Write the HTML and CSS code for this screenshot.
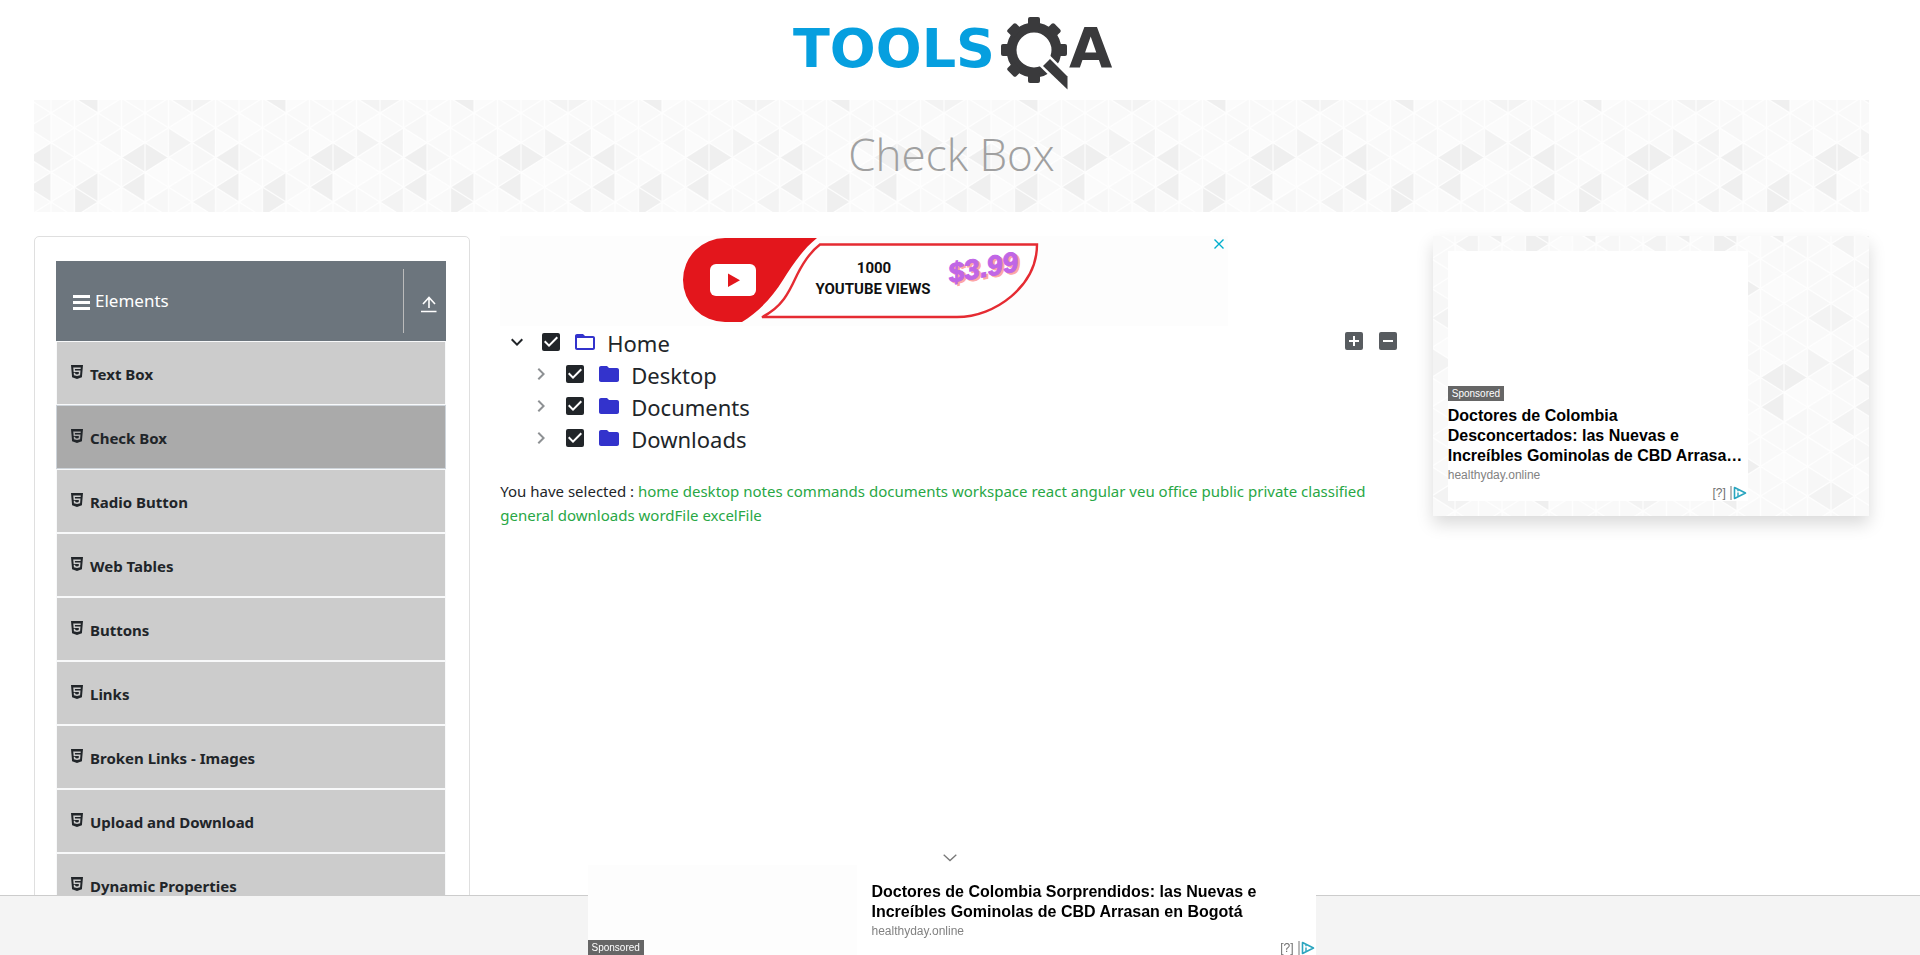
FILE: index.html
```html
<!DOCTYPE html>
<html lang="en">
<head>
<meta charset="utf-8">
<title>Check Box</title>
<link rel="stylesheet" href="styles.css">
</head>
<body>
<svg class="defs" width="0" height="0" aria-hidden="true">
  <symbol id="html5" viewBox="0 0 384 512"><path d="M0 32l34.9 395.8L191.5 480l157.6-52.2L384 32H0zm308.2 127.9H124.4l4.1 49.4h175.6l-13.6 148.4-97.9 27v.3h-1.1l-98.7-27.3-6-75.8h47.7L138 320l53.5 14.5 53.7-14.5 6-62.2H84.3L71.5 112.2h241.1l-4.4 47.7z"/></symbol>
  <symbol id="more" viewBox="0 0 24 24"><path d="M7.41 8.59 12 13.17l4.59-4.58L18 10l-6 6-6-6z"/></symbol>
  <symbol id="right" viewBox="0 0 24 24"><path d="M8.59 16.59 13.17 12 8.59 7.41 10 6l6 6-6 6z"/></symbol>
  <symbol id="folder" viewBox="0 0 24 24"><path d="M10 4H4c-1.1 0-2 .9-2 2v12c0 1.100.9 2 2 2h16c1.100 0 2-.9 2-2V8c0-1.100-.9-2-2-2h-8z"/></symbol>
  <symbol id="folder-open" viewBox="0 0 24 24"><path d="M20 6h-8l-2-2H4c-1.100 0-2 .9-2 2v12c0 1.100.9 2 2 2h16c1.100 0 2-.9 2-2V8c0-1.100-.9-2-2-2zm0 12H4V8h16z"/></symbol>
  <symbol id="adchoice" viewBox="0 0 17 14"><path d="M1 0v14" stroke="#777" fill="none"/><path d="M4.500 1.500v11l11-5.500z" stroke="#2aa5bf" stroke-width="1.600" stroke-linejoin="round" fill="none"/><path d="M8 6.500v3.500M8 4v1.300" stroke="#2aa5bf" stroke-width="1.400" fill="none"/></symbol>
</svg>
<header class="top">
  <a class="logo" href="#" aria-label="ToolsQA">
    <svg width="324" height="76" viewBox="0 0 324 76">
      <text class="logo-blue" x="3" y="51">TOOLS</text>
      <g fill="#3a3a3c">
        <circle cx="244" cy="34" r="22.500" fill="none" stroke="#3a3a3c" stroke-width="10"/>
        <rect x="238" y="1" width="12" height="10" rx="2"/>
        <rect x="238" y="1" width="12" height="10" rx="2" transform="rotate(45 244 34)"/>
        <rect x="238" y="1" width="12" height="10" rx="2" transform="rotate(90 244 34)"/>
        <rect x="238" y="1" width="12" height="10" rx="2" transform="rotate(135 244 34)"/>
        <rect x="238" y="1" width="12" height="10" rx="2" transform="rotate(180 244 34)"/>
        <rect x="238" y="1" width="12" height="10" rx="2" transform="rotate(225 244 34)"/>
        <rect x="238" y="1" width="12" height="10" rx="2" transform="rotate(270 244 34)"/>
        <rect x="238" y="1" width="12" height="10" rx="2" transform="rotate(315 244 34)"/>
        <path d="M260 43l17 17v13.500L253 50z" fill="#fff" stroke="#fff" stroke-width="5"/>
        <path d="M260 43l17.500 17.500v13L253 50z"/>
      </g>
      <text class="logo-dark" x="279" y="51">A</text>
    </svg>
  </a>
</header>
<main class="page">
  <div class="banner pattern"><h1>Check Box</h1></div>
  <div class="columns">
    <nav class="side">
      <div class="group">
        <svg width="18" height="16" viewBox="0 0 18 16"><path d="M0 1.500h17M0 7.500h17M0 13.500h17" stroke="#fff" stroke-width="3"/></svg>
        <span class="group-name">Elements</span>
        <button class="collapse" aria-label="Collapse">
          <svg width="16" height="17" viewBox="0 0 16 17" fill="none" stroke="#fff" stroke-width="1.600"><path d="M8 12V1.500M2 8l6-6.500L14 8M0 15.500h15.500"/></svg>
        </button>
      </div>
      <ul class="menu">
        <li><a href="#"><svg class="h5"><use href="#html5"/></svg>Text Box</a></li>
        <li class="active"><a href="#"><svg class="h5"><use href="#html5"/></svg>Check Box</a></li>
        <li><a href="#"><svg class="h5"><use href="#html5"/></svg>Radio Button</a></li>
        <li><a href="#"><svg class="h5"><use href="#html5"/></svg>Web Tables</a></li>
        <li><a href="#"><svg class="h5"><use href="#html5"/></svg>Buttons</a></li>
        <li><a href="#"><svg class="h5"><use href="#html5"/></svg>Links</a></li>
        <li><a href="#"><svg class="h5"><use href="#html5"/></svg>Broken Links - Images</a></li>
        <li><a href="#"><svg class="h5"><use href="#html5"/></svg>Upload and Download</a></li>
        <li><a href="#"><svg class="h5"><use href="#html5"/></svg>Dynamic Properties</a></li>
      </ul>
    </nav>
    <section class="content">
      <div class="views-ad">
        <svg width="724" height="90" viewBox="0 0 724 90">
          <path fill="#e3161c" d="M225 2H317C302 14 292 30 283 44C272 62 258 76 242 86H225A42 42 0 0 1 225 2z"/>
          <rect x="210" y="28" width="46" height="32" rx="6" fill="#fff"/>
          <path fill="#e3161c" d="M228 37.500v13.500l12-6.800z"/>
          <path fill="#fff" stroke="#e52b32" stroke-width="2.400" d="M320 8.500H537C537 50 495 81 457 81H262C283 71 290 54 297 39C303 27 310 16 320 8.500z"/>
          <text class="views" x="374" y="37" text-anchor="middle">1000</text>
          <text class="views" x="373" y="58" text-anchor="middle">YOUTUBE VIEWS</text>
          <g transform="rotate(-10 483 31)">
            <text class="price price-shadow" x="485" y="43" text-anchor="middle">$3.99</text>
            <text class="price" x="483" y="41" text-anchor="middle">$3.99</text>
          </g>
        </svg>
        <button class="ad-close" aria-label="Close ad"><svg width="10" height="10" viewBox="0 0 10 10"><path d="M.5.5l9 9M9.500.5l-9 9" stroke="#00aecd" stroke-width="1.400"/></svg></button>
      </div>
      <div class="tree-area">
        <ul class="tree">
          <li>
            <div class="node">
              <button class="toggle open" aria-label="Toggle"><svg><use href="#more"/></svg></button>
              <input type="checkbox" id="n-home" checked>
              <svg class="fold"><use href="#folder-open"/></svg>
              <label for="n-home">Home</label>
            </div>
            <ul>
              <li class="node"><button class="toggle" aria-label="Toggle"><svg><use href="#right"/></svg></button><input type="checkbox" id="n-desk" checked><svg class="fold"><use href="#folder"/></svg><label for="n-desk">Desktop</label></li>
              <li class="node"><button class="toggle" aria-label="Toggle"><svg><use href="#right"/></svg></button><input type="checkbox" id="n-docs" checked><svg class="fold"><use href="#folder"/></svg><label for="n-docs">Documents</label></li>
              <li class="node"><button class="toggle" aria-label="Toggle"><svg><use href="#right"/></svg></button><input type="checkbox" id="n-down" checked><svg class="fold"><use href="#folder"/></svg><label for="n-down">Downloads</label></li>
            </ul>
          </li>
        </ul>
        <div class="tools">
          <button aria-label="Expand all"><svg viewBox="0 0 24 24"><path d="M19 3H5a2 2 0 0 0-2 2v14a2 2 0 0 0 2 2h14a2 2 0 0 0 2-2V5a2 2 0 0 0-2-2zm-2 10h-4v4h-2v-4H7v-2h4V7h2v4h4z"/></svg></button>
          <button aria-label="Collapse all"><svg viewBox="0 0 24 24"><path d="M19 3H5a2 2 0 0 0-2 2v14a2 2 0 0 0 2 2h14a2 2 0 0 0 2-2V5a2 2 0 0 0-2-2zm-2 10H7v-2h10z"/></svg></button>
        </div>
      </div>
      <p class="result">You have selected : <span>home</span> <span>desktop</span> <span>notes</span> <span>commands</span> <span>documents</span> <span>workspace</span> <span>react</span> <span>angular</span> <span>veu</span> <span>office</span> <span>public</span> <span>private</span> <span>classified</span> <span>general</span> <span>downloads</span> <span>wordFile</span> <span>excelFile</span></p>
    </section>
    <aside class="promo pattern shifted">
      <div class="promo-ad">
        <span class="badge">Sponsored</span>
        <a class="ad-title" href="#">Doctores de Colombia Desconcertados: las Nuevas e Increíbles Gominolas de CBD Arrasa…</a>
        <span class="host">healthyday.online</span>
        <div class="choices">[?]<svg width="17" height="14"><use href="#adchoice"/></svg></div>
      </div>
    </aside>
  </div>
</main>
<footer class="sticky">
  <div class="sticky-ad">
    <button class="sticky-close" aria-label="Hide ad"><svg width="14" height="8" viewBox="0 0 14 8"><path d="M.7.7 7 6.500 13.300.7" fill="none" stroke="#777" stroke-width="1.300"/></svg></button>
    <div class="sticky-body">
      <div class="sticky-pic"><span class="badge">Sponsored</span></div>
      <div class="sticky-text">
        <a class="ad-title" href="#">Doctores de Colombia Sorprendidos: las Nuevas e Increíbles Gominolas de CBD Arrasan en Bogotá</a>
        <span class="host">healthyday.online</span>
        <div class="choices">[?]<svg width="17" height="14"><use href="#adchoice"/></svg></div>
      </div>
    </div>
  </div>
</footer>
</body>
</html>
```

FILE: styles.css
```css
* { box-sizing: border-box; }
body {
  margin: 0;
  background: #fff;
  color: #212529;
  font-family: "Noto Sans", "Open Sans", sans-serif;
  font-size: 15px;
  line-height: 24px;
}
button { border: 0; padding: 0; background: none; cursor: pointer; display: block; }
ul { list-style: none; margin: 0; padding: 0; }
a { color: inherit; text-decoration: none; }
svg { display: block; flex: none; }
.defs { position: absolute; }

.top { display: flex; justify-content: center; height: 100px; padding: 16px 17px 0 0; }
.logo-blue, .logo-dark { font-family: "DejaVu Sans", sans-serif; font-weight: 700; }
.logo-blue { fill: #069fdf; font-size: 54px; }
.logo-dark { fill: #3a3a3c; font-size: 56px; }

.page { padding: 0 51px 0 34px; }
.pattern {
  background-color: #f9f9f9;
  background-size: 188px 178px;
  background-position: 17px 13px;
  background-image: url("data:image/svg+xml,%3Csvg xmlns='http://www.w3.org/2000/svg' width='188' height='178' viewBox='0 0 8 12' preserveAspectRatio='none'%3E%3Cpath fill='%23fbfbfb' d='M0 0l1 1-1 1zM2 2l1 1-1 1zM5 3l1 1-1 1zM4 4l1 1-1 1zM3 1l1 1-1 1zM6 6l1 1-1 1zM1 7l1 1-1 1zM0 4l1 1-1 1zM7 1l1 1-1 1zM4 8l1 1-1 1zM2 10l1 1-1 1zM7 9l1 1-1 1zM5 1l1-1v2zM1 3l1-1v2zM4 4l1-1v2zM0 8l1-1v2zM3 9l1-1v2zM2 6l1-1v2z'/%3E%3Cpath fill='%23f7f7f7' d='M0 2l1 1-1 1zM6 2l1 1-1 1zM3 3l1 1-1 1zM7 7l1 1-1 1zM5 9l1 1-1 1zM1 9l1 1-1 1zM0 10l1-1v2zM4 6l1-1v2zM2 2l1-1v2zM7 1l1-1v2zM6 8l1-1v2z'/%3E%3Cpath fill='%23f3f3f3' d='M5 1l1 1-1 1zM6 2l1-1v2zM6 6l1-1v2zM5 11l1-1v2zM6 10l1 1-1 1z'/%3E%3Cpath fill='%23efefef' d='M3 3l1-1v2zM4 2l1 1-1 1zM7 3l1-1v2zM7 5l1-1v2zM1 5l1-1v2zM1 5l1 1-1 1zM3 5l1-1v2zM1 11l1-1v2zM2 8l1 1-1 1z'/%3E%3Cpath fill='none' stroke='%23fff' stroke-opacity='.8' stroke-width='1.3' vector-effect='non-scaling-stroke' d='M0 0v12M1 0v12M2 0v12M3 0v12M4 0v12M5 0v12M6 0v12M7 0v12M8 0v12M0-6l8 8M0-4l8 8M0-2l8 8M0 0l8 8M0 2l8 8M0 4l8 8M0 6l8 8M0 8l8 8M0 10l8 8M0 12l8 8M0 2l8-8M0 4l8-8M0 6l8-8M0 8l8-8M0 10l8-8M0 12l8-8M0 14l8-8M0 16l8-8M0 18l8-8'/%3E%3C/svg%3E");
}
.shifted { background-position: 69px 97px; }
.banner { height: 112px; display: flex; align-items: center; justify-content: center; margin-bottom: 24px; }
.banner h1 { margin: 0 0 4px; font-family: "Open Sans", "Noto Sans", sans-serif; font-size: 44px; line-height: 56px; font-weight: 300; color: #a0a0a0; }

.columns { display: grid; grid-template-columns: repeat(4, minmax(0, 1fr)); gap: 30px; align-items: start; }

.side { border: 1px solid #dfdfdf; border-radius: 5px; padding: 24px 23px 24px 21px; }
.group { display: flex; align-items: center; height: 80px; padding: 8px 0 8px 17px; background: #6c757d; color: #fff; }
.group > svg { margin-top: 4px; }
.group-name { flex: 1; padding-left: 4px; font-size: 17px; }
.collapse { align-self: stretch; width: 43px; padding: 6px 0 0 17px; border-left: 1px solid #bbb; }
.menu li { border: 1px solid #f8f9fa; background: #ccc; }
.menu .active { background: #aaa; border-color: #ced4da; }
.menu a { display: flex; align-items: center; height: 62px; padding: 2px 0 0 14px; gap: 7px; font-weight: 700; }
.h5 { width: 12px; height: 16px; margin-bottom: 4px; fill: #212529; }

.content { grid-column: span 2; }
.views-ad { position: relative; max-width: 728px; background: #fdfdfd; }
.views { font-family: Roboto, "Liberation Sans", sans-serif; font-weight: 700; font-size: 15px; fill: #111; }
.price { font-family: "Liberation Sans", Arial, sans-serif; font-weight: 700; font-style: italic; font-size: 28px; fill: #c066e6; stroke: #c066e6; }
.price-shadow { fill: #fda5a5; stroke: #fda5a5; }
.ad-close { position: absolute; top: 3px; right: 4px; }

.tree-area { display: flex; justify-content: space-between; align-items: flex-start; padding-left: 5px; }
.tree ul { padding-left: 24px; }
.node { display: flex; align-items: center; gap: 10px; height: 32px; }
.node svg { width: 24px; height: 24px; }
.toggle { fill: #8e9194; }
.toggle.open { fill: #212529; }
.fold { fill: #33c; }
.node input {
  appearance: none;
  flex: none;
  width: 18px;
  height: 18px;
  margin: 0 3px;
  border-radius: 2px;
  background: #212529 url("data:image/svg+xml,%3Csvg xmlns='http://www.w3.org/2000/svg' viewBox='3 3 18 18'%3E%3Cpath fill='%23fff' d='M10 17l-5-5 1.410-1.410L10 14.170l7.590-7.590L19 8z'/%3E%3C/svg%3E") center / 18px 18px;
}
.node label { font-size: 22px; line-height: 28px; padding-top: 2px; }
.tools { display: flex; gap: 10px; padding: 3px 3px 0 0; }
.tools svg { width: 24px; height: 24px; fill: #585c60; }
.result { margin: 25px 0 0; }
.result span { color: #28a745; }

.promo { padding: 15px; box-shadow: 0 8px 16px rgba(0, 0, 0, .15); }
.promo-ad { display: flex; flex-direction: column; width: 300px; height: 250px; padding-top: 135px; background: #fff; }
.badge { align-self: flex-start; padding: 0 4px; background: #666; color: #fff; font: 10px/15px "Liberation Sans", Arial, sans-serif; }
.ad-title { margin-top: 5px; color: #000; font: 700 16px/20px "Liberation Sans", Arial, sans-serif; }
.host { color: #828282; font: 12px/18px "Liberation Sans", Arial, sans-serif; }
.choices { display: flex; align-items: center; align-self: flex-end; gap: 4px; margin-top: auto; padding-right: 1px; color: #707070; font: 12px/16px "Liberation Sans", Arial, sans-serif; }

.sticky { position: fixed; left: 0; right: 0; bottom: 0; height: 60px; padding-right: 17px; display: flex; justify-content: center; align-items: flex-end; background: #f4f4f4; border-top: 1px solid #ccc; }
.sticky-ad { width: 728px; }
.sticky-close { margin: 0 auto; padding: 0 4px 3px 0; }
.sticky-body { display: flex; height: 90px; background: #fff; }
.sticky-pic { display: flex; align-items: flex-end; width: 269px; background: #fdfdfd; }
.sticky-pic .badge { align-self: flex-end; }
.sticky-text { flex: 1; display: flex; flex-direction: column; padding-left: 15px; }
.sticky-text .ad-title { margin: 17px 40px 0 0; }
```
